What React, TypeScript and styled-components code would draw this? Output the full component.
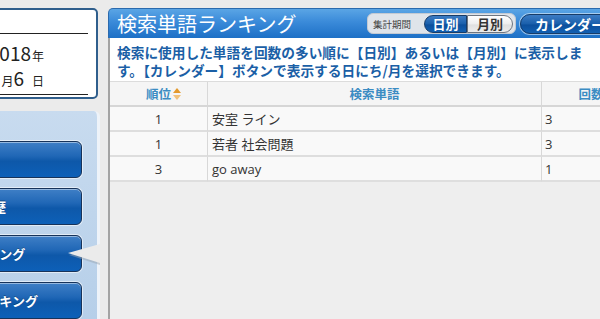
import React, { FC } from "react";
import styled, { createGlobalStyle } from "styled-components";

type RankRow = {
  rank: number;
  word: string;
  count: number;
};

const rows: RankRow[] = [
  { rank: 1, word: "安室 ライン", count: 3 },
  { rank: 1, word: "若者 社会問題", count: 3 },
  { rank: 3, word: "go away", count: 1 },
];

const menuItems = ["トップ", "ログイン履歴", "検索単語ランキング", "記事アクセスランキング"];
const activeMenu = 2;

const App: FC = () => {
  return (
    <>
      <GlobalStyle />
      <Page>
        <Sidebar>
          <DateBox>
            <Rule />
            <DateText>
              <DateLine>
                <Num>2018</Num>
                <Unit>年</Unit>
              </DateLine>
              <DateLine>
                <Num>12</Num>
                <Unit>月</Unit>
                <Num>6</Num>
                <Unit $gap={8}>日</Unit>
              </DateLine>
            </DateText>
            <Rule />
          </DateBox>
          <MenuPanel>
            {menuItems.map((label, i) => (
              <MenuButton key={label}>
                {label}
                {i === activeMenu && (
                  <Pointer width="32" height="22" viewBox="0 0 32 22">
                    <polygon points="1,11 32,2 32,21" fill="#9aa6b2" opacity="0.5" />
                    <polygon points="0,9 32,0 32,19" fill="#ebebeb" />
                  </Pointer>
                )}
              </MenuButton>
            ))}
          </MenuPanel>
        </Sidebar>

        <Main>
          <Header>
            <Title>検索単語ランキング</Title>
            <PeriodGroup>
              <PeriodLabel>集計期間</PeriodLabel>
              <SegButton $active $side="left">日別</SegButton>
              <SegButton $side="right">月別</SegButton>
            </PeriodGroup>
            <CalendarButton>カレンダー</CalendarButton>
          </Header>
          <Body>
            <Description>
              検索に使用した単語を回数の多い順に【日別】あるいは【月別】に表示します。【カレンダー】ボタンで表示する日にち/月を選択できます。
            </Description>
            <Table>
              <colgroup>
                <col style={{ width: 98 }} />
                <col style={{ width: 334 }} />
                <col />
              </colgroup>
              <thead>
                <tr>
                  <Th>
                    順位
                    <SortIcon width="8" height="12" viewBox="0 0 8 12">
                      <polygon points="4,0 8,5 0,5" fill="#e39a2d" />
                      <polygon points="0,7 8,7 4,12" fill="#f1c27a" />
                    </SortIcon>
                  </Th>
                  <Th>検索単語</Th>
                  <Th>回数</Th>
                </tr>
              </thead>
              <tbody>
                {rows.map((row) => (
                  <tr key={row.word}>
                    <Td $align="center">{row.rank}</Td>
                    <Td>{row.word}</Td>
                    <Td $pad={3}>{row.count}</Td>
                  </tr>
                ))}
              </tbody>
            </Table>
          </Body>
        </Main>
      </Page>
    </>
  );
};

const GlobalStyle = createGlobalStyle`
  html, body {
    margin: 0;
    padding: 0;
    background: #ebebeb;
    overflow: hidden;
    font-family: "Noto Sans CJK JP", sans-serif;
  }
`;

const Page = styled.div`
  display: flex;
  height: 319px;
  width: max-content;
`;

const Sidebar = styled.div`
  width: 260px;
  margin-left: -160px;
  flex-shrink: 0;
  display: flex;
  flex-direction: column;
  align-items: flex-end;
`;

const DateBox = styled.div`
  box-sizing: border-box;
  width: 166px;
  height: 92px;
  margin: 8px 2px 0 0;
  padding: 23px 0 2px;
  border: 2px solid #2f5e8c;
  border-radius: 5px;
  background: #fff;
  display: flex;
  flex-direction: column;
`;

const Rule = styled.div`
  height: 1px;
  margin: 0 8px;
  background: #222;
`;

const DateText = styled.div`
  flex: 1;
  padding: 6px 52px 0 0;
  text-align: right;
  color: #222;
`;

const DateLine = styled.div`
  height: 25px;
  line-height: 25px;
  white-space: nowrap;
`;

const Num = styled.span`
  font-size: 19px;
`;

const Unit = styled.span<{ $gap?: number }>`
  font-size: 12px;
  margin-left: ${({ $gap }) => $gap ?? 1}px;
`;

const MenuPanel = styled.div`
  align-self: stretch;
  flex: 1;
  margin-top: 12px;
  padding: 30px 15px 0 12px;
  background: linear-gradient(#c8dbef, #b6cfe9);
  border-right: 3px solid #eef3f9;
  border-radius: 0 6px 0 0;
  display: flex;
  flex-direction: column;
  gap: 10px;
`;

const MenuButton = styled.div`
  position: relative;
  flex-shrink: 0;
  height: 37px;
  box-sizing: border-box;
  border: 1px solid #17335a;
  border-radius: 6px;
  background: linear-gradient(#3f7fc6 0%, #2067b6 40%, #0e58a9 55%, #0d60b8 100%);
  box-shadow: inset 0 1px 0 rgba(255, 255, 255, 0.45), 0 0 0 1px rgba(255, 255, 255, 0.55);
  display: flex;
  align-items: center;
  justify-content: center;
  color: #fff;
  font-size: 13px;
  font-weight: 700;
  text-shadow: 0 -1px 0 rgba(0, 0, 0, 0.3);
  white-space: nowrap;
`;

const Pointer = styled.svg`
  position: absolute;
  right: -19px;
  top: 8px;
`;

const Main = styled.div`
  width: 532px;
  flex-shrink: 0;
  margin-left: 8px;
  padding-top: 8px;
  display: flex;
  flex-direction: column;
`;

const Header = styled.div`
  height: 30px;
  box-sizing: border-box;
  padding: 0 7px 0 8px;
  border: 1px solid #2b6aad;
  border-bottom: none;
  border-radius: 5px 5px 0 0;
  background: linear-gradient(#5aa5e5, #3a8ad9 45%, #1d70c6);
  display: flex;
  align-items: center;
  gap: 4px;
`;

const Title = styled.div`
  flex: 1;
  color: #fff;
  font-size: 20px;
  line-height: 28px;
  white-space: nowrap;
`;

const PeriodGroup = styled.div`
  box-sizing: border-box;
  width: 149px;
  height: 21px;
  padding: 0 0 0 5px;
  border: 1px solid #c3cad3;
  border-radius: 6px;
  background: #dfe4ea;
  display: flex;
  align-items: center;
`;

const PeriodLabel = styled.span`
  font-size: 9.5px;
  color: #444;
  margin-right: 13px;
  white-space: nowrap;
`;

const SegButton = styled.span<{ $active?: boolean; $side: "left" | "right" }>`
  box-sizing: border-box;
  height: 18px;
  width: ${({ $side }) => ($side === "left" ? 43 : 46)}px;
  border: 1px solid ${({ $active }) => ($active ? "#173c68" : "#6d7580")};
  border-radius: ${({ $side }) => ($side === "left" ? "9px 0 0 9px" : "0 9px 9px 0")};
  background: ${({ $active }) =>
    $active
      ? "linear-gradient(#3c7cc4, #1a5fab 50%, #0c4f9c 55%, #1260b2)"
      : "linear-gradient(#ffffff, #eeeeee 50%, #e0e0e0 55%, #ececec)"};
  color: ${({ $active }) => ($active ? "#fff" : "#333")};
  font-size: 13px;
  font-weight: 700;
  line-height: 16px;
  text-align: center;
  white-space: nowrap;
`;

const CalendarButton = styled.span`
  box-sizing: border-box;
  width: 112px;
  height: 20px;
  padding-left: 14px;
  border: 1px solid #173c68;
  border-radius: 10px;
  background: linear-gradient(#3c7cc4, #1a5fab 50%, #0c4f9c 55%, #1260b2);
  box-shadow: 0 0 0 1px rgba(255, 255, 255, 0.5);
  color: #fff;
  font-size: 14px;
  font-weight: 700;
  line-height: 18px;
  white-space: nowrap;
`;

const Body = styled.div`
  flex: 1;
  border-left: 2px solid #a3a3a3;
  background: #eeeeee;
  display: flex;
  flex-direction: column;
`;

const Description = styled.div`
  background: #fff;
  padding: 5px 53px 2px 7px;
  color: #1b5fa6;
  font-size: 13.7px;
  font-weight: 700;
  line-height: 18px;
`;

const Table = styled.table`
  width: 530px;
  table-layout: fixed;
  border-collapse: separate;
  border-spacing: 0;
  border-top: 1px solid #dcdcdc;
  font-family: "Open Sans", "Noto Sans CJK JP", sans-serif;
`;

const Th = styled.th`
  box-sizing: border-box;
  height: 25px;
  padding: 0;
  background: #f5f5f5;
  border-bottom: 2px solid #d6d6d6;
  border-right: 1px solid #d8d8d8;
  color: #3b8cc3;
  font-family: "Noto Sans CJK JP", sans-serif;
  font-size: 12.5px;
  font-weight: 700;
  text-align: center;
  white-space: nowrap;
  &:last-child {
    border-right: none;
  }
`;

const SortIcon = styled.svg`
  margin-left: 2px;
  margin-right: -10px;
  vertical-align: -1px;
`;

const Td = styled.td<{ $align?: "center" | "left"; $pad?: number }>`
  box-sizing: border-box;
  height: 25px;
  padding: 0 0 0 ${({ $pad }) => $pad ?? 4}px;
  background: #f9f9f9;
  border-bottom: 2px solid #dedede;
  border-right: 1px solid #d8d8d8;
  color: #333;
  font-size: 13px;
  text-align: ${({ $align }) => $align ?? "left"};
  white-space: nowrap;
  &:first-child {
    padding: 0;
  }
  &:last-child {
    border-right: none;
  }
`;

export default App;
